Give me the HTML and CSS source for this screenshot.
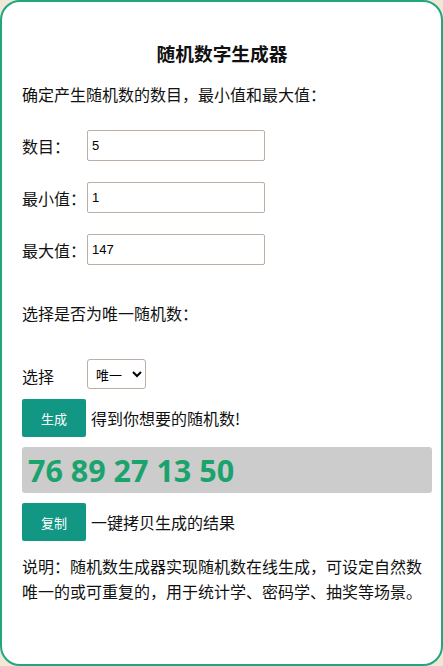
FILE: index.html
```html
<!DOCTYPE html>
<html lang="zh-CN">
<head>
<meta charset="utf-8">
<title>随机数字生成器</title>
<link rel="stylesheet" href="styles.css">
</head>
<body>
<div class="card">
  <h1 class="title">随机数字生成器</h1>
  <p class="intro">确定产生随机数的数目，最小值和最大值：</p>
  <div class="field">
    <label class="label">数目：</label>
    <input class="input" type="text" value="5">
  </div>
  <div class="field">
    <label class="label">最小值：</label>
    <input class="input" type="text" value="1">
  </div>
  <div class="field">
    <label class="label">最大值：</label>
    <input class="input" type="text" value="147">
  </div>
  <p class="question">选择是否为唯一随机数：</p>
  <div class="field select-row">
    <label class="label">选择</label>
    <select class="select"><option>唯一</option><option>可重复</option></select>
  </div>
  <div class="action">
    <button class="btn">生成</button>
    <span class="hint">得到你想要的随机数!</span>
  </div>
  <div class="result">76 89 27 13 50</div>
  <div class="action">
    <button class="btn">复制</button>
    <span class="hint">一键拷贝生成的结果</span>
  </div>
  <p class="note">说明：随机数生成器实现随机数在线生成，可设定自然数唯一的或可重复的，用于统计学、密码学、抽奖等场景。</p>
</div>
</body>
</html>
```

FILE: styles.css
```css
* { box-sizing: border-box; }
html, body { margin: 0; padding: 0; }
body {
  background: #efe8d6;
  font-family: "Noto Sans CJK SC", "Noto Sans", sans-serif;
  color: #111;
}
.card {
  height: 666px;
  background: #fff;
  border: 2px solid #22a67c;
  border-radius: 20px;
  padding: 0 9px 0 20px;
  overflow: hidden;
}
.title {
  margin: 38px 0 0;
  padding-right: 10px;
  font-size: 18.72px;
  line-height: 26px;
  font-weight: 700;
  text-align: center;
}
.intro, .question, .note {
  margin: 0;
  font-size: 16px;
  line-height: 24px;
}
.intro { margin-top: 16px; }
.field {
  display: flex;
  align-items: center;
  margin-top: 21px;
}
.intro + .field { margin-top: 24px; }
.label {
  width: 65px;
  flex: none;
  font-size: 16px;
  line-height: 24px;
}
.input {
  width: 178px;
  height: 31px;
  border: 1px solid #bcaea3;
  border-radius: 2px;
  padding: 0 4px;
  font-family: "Liberation Sans", Arial, sans-serif;
  font-size: 13px;
  color: #000;
  background: #fff;
}
.question { margin-top: 36px; }
.select-row { margin-top: 34px; }
.select-row .label { padding-top: 3px; }
.select {
  width: 59px;
  height: 30px;
  border: 1px solid #bcaea3;
  border-radius: 3px;
  background: #fff;
  font-family: "Noto Sans CJK SC", sans-serif;
  font-size: 13px;
  color: #000;
  padding: 0 2px 0 4px;
}
.action {
  display: flex;
  align-items: center;
  gap: 5px;
  margin-top: 10px;
}
.btn {
  width: 64px;
  height: 38px;
  border: none;
  border-radius: 2px;
  background: #129785;
  color: #fff;
  font-family: "Noto Sans CJK SC", sans-serif;
  font-size: 13px;
  padding: 0;
}
.hint {
  font-size: 16px;
  line-height: 24px;
}
.result {
  margin-top: 10px;
  height: 46px;
  background: #cccccc;
  border-radius: 3px;
  padding: 0 6px;
  font-family: "Open Sans", sans-serif;
  font-weight: 700;
  font-size: 30.5px;
  line-height: 46px;
  color: #1aa36d;
}
.note {
  margin-top: 13px;
  line-height: 25px;
}
```
